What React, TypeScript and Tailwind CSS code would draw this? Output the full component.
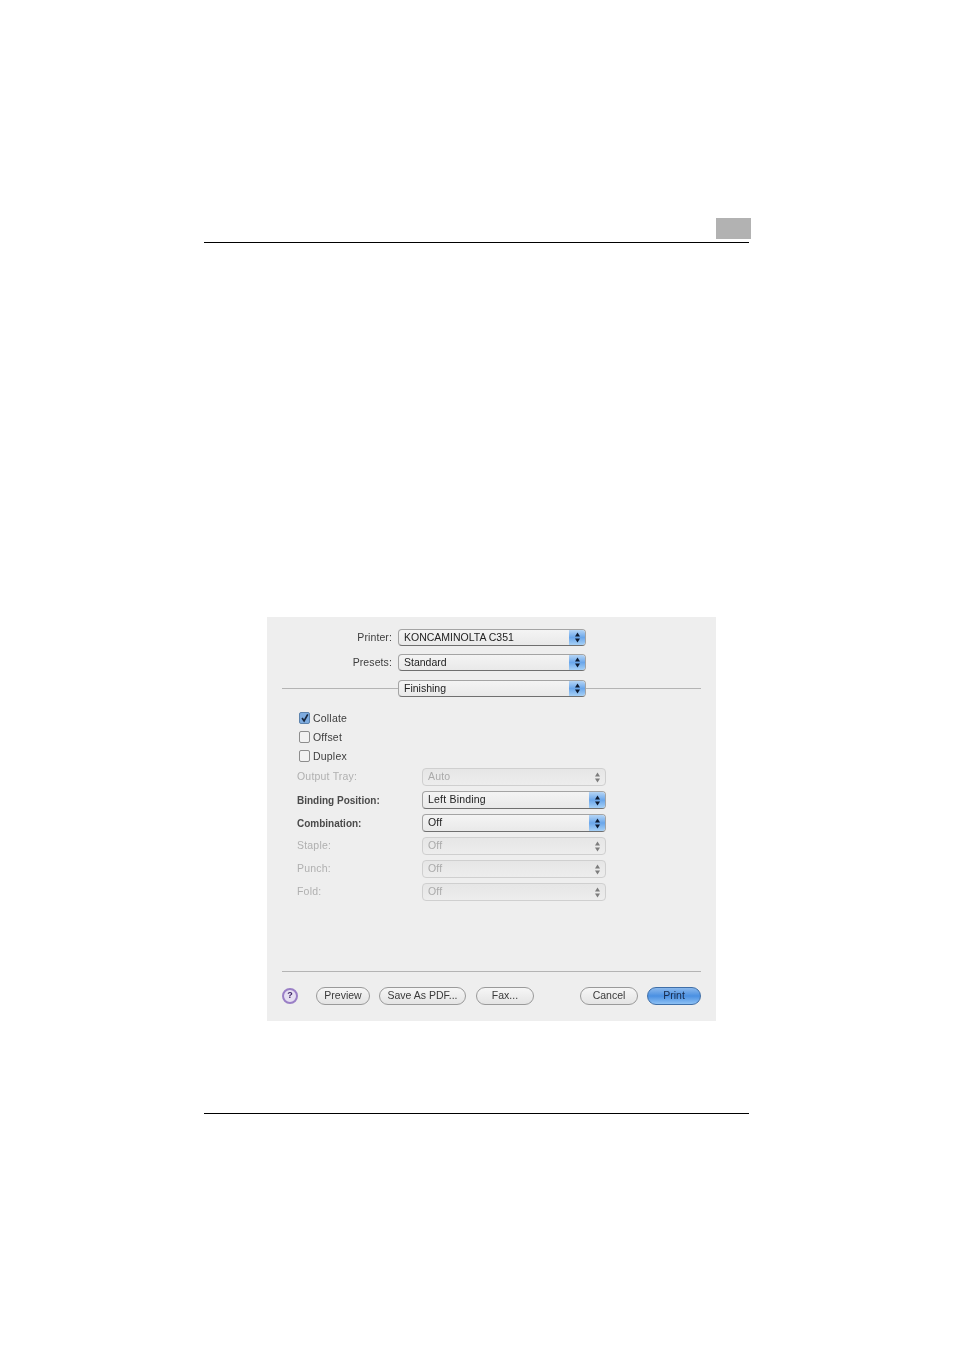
import { ReactNode } from 'react';

function Stepper({ off }: { off?: boolean }) {
  return (
    <span
      className={
        off
          ? 'w-[15px] self-stretch rounded-r-[3px] flex items-center justify-center'
          : 'w-[16px] self-stretch rounded-r-[3px] flex items-center justify-center bg-gradient-to-b from-[#b5d5f5] via-[#6aa6ea] to-[#a6d0f6]'
      }
    >
      <svg width="7" height="13" viewBox="0 0 7 13">
        <path d="M3.5 1.5 6 5.5H1z" fill={off ? '#7c7c7c' : '#0c1a30'} />
        <path d="M3.5 11.5 6 7.5H1z" fill={off ? '#7c7c7c' : '#0c1a30'} />
      </svg>
    </span>
  );
}

function Select({ value, off, className }: { value: string; off?: boolean; className: string }) {
  return (
    <div
      className={
        'flex items-center justify-between rounded-[4px] border bg-gradient-to-b pl-[5px] text-[10.5px] ' +
        (off
          ? 'border-[#cfcfcf] from-[#e6e6e6] to-[#ededed] text-[#aaaaaa] tracking-[0.2px] '
          : 'border-[#a4a4a4] border-b-[#6f6f6f] from-[#f4f4f4] to-[#e9e9e9] text-[#222222] ') +
        className
      }
    >
      <span>{value}</span>
      <Stepper off={off} />
    </div>
  );
}

function Check({ label, checked }: { label: string; checked?: boolean }) {
  return (
    <div className="flex items-center h-[12px] text-[10.5px] tracking-[0.2px] text-[#3d3d3d]">
      <span
        className={
          'w-[11px] h-[12px] mr-[3px] rounded-[2px] border flex items-center justify-center ' +
          (checked ? 'bg-[#7dabdf] border-[#5d83ad]' : 'bg-[#f2f2f2] border-[#8d8d8d]')
        }
      >
        {checked && (
          <svg width="11" height="12" viewBox="0 0 11 12">
            <path d="M2.5 6 5 9.5 9.5 1.5" fill="none" stroke="#16243a" strokeWidth="2" />
          </svg>
        )}
      </span>
      <span className="pt-[2px]">{label}</span>
    </div>
  );
}

function TopRow({ label, value }: { label?: string; value: string }) {
  return (
    <div className="flex items-center h-[17px]">
      <span className="w-[125px] pr-[6px] text-right text-[10.5px] tracking-[0.1px] text-[#3d3d3d]">{label}</span>
      <Select value={value} className="w-[188px] h-[17px]" />
    </div>
  );
}

function Row({ label, value, off }: { label: string; value: string; off?: boolean }) {
  return (
    <div className="flex items-center h-[18px]">
      <span
        className={
          'w-[125px] ' +
          (off ? 'text-[10.5px] tracking-[0.2px] text-[#b0b0b0]' : 'text-[10px] text-[#4a4a4a] font-bold')
        }
      >
        {label}
      </span>
      <Select value={value} off={off} className="w-[184px] h-[18px] tracking-[0.2px]" />
    </div>
  );
}

function Pill({ children, className }: { children: ReactNode; className: string }) {
  return (
    <div
      className={
        'h-[18px] rounded-full border border-[#9a9a9a] bg-gradient-to-b from-[#f6f6f6] to-[#e4e4e4] flex items-center justify-center text-[10.5px] text-[#3a3a3a] ' +
        className
      }
    >
      {children}
    </div>
  );
}

export default function App() {
  return (
    <div className="relative w-[954px] h-[1350px] bg-white pt-[218px] font-['Liberation_Sans',sans-serif]">
      {/* Page header */}
      <div className="ml-[204px] w-[547px]">
        <div className="ml-auto w-[35px] h-[21px] bg-[#b2b2b2]" />
        <div className="mt-[3px] w-[545px] h-px bg-black" />
      </div>

      {/* Print dialog */}
      <div className="ml-[267px] mt-[374px] w-[449px] h-[404px] bg-[#eeeeee] pt-[12px] blur-[0.7px]">
        <div className="pl-[6px] flex flex-col gap-[8px]">
          <TopRow label="Printer:" value="KONCAMINOLTA C351" />
          <TopRow label="Presets:" value="Standard" />
        </div>
        <div className="relative mt-[9px] h-[17px] ml-[15px] w-[419px]">
          <div className="absolute left-0 right-0 top-[8px] h-px bg-[#b4b4b4]" />
          <div className="absolute left-[116px] top-0">
            <Select value="Finishing" className="w-[188px] h-[17px]" />
          </div>
        </div>

        <div className="mt-[15px] ml-[32px] flex flex-col gap-[7px]">
          <Check label="Collate" checked />
          <Check label="Offset" />
          <Check label="Duplex" />
        </div>

        <div className="mt-[6px] ml-[30px] flex flex-col gap-[5px]">
          <Row label="Output Tray:" value="Auto" off />
          <Row label="Binding Position:" value="Left Binding" />
          <Row label="Combination:" value="Off" />
          <Row label="Staple:" value="Off" off />
          <Row label="Punch:" value="Off" off />
          <Row label="Fold:" value="Off" off />
        </div>

        <div className="mt-[70px] ml-[15px] w-[419px] h-px bg-[#b4b4b4]" />

        <div className="mt-[15px] ml-[15px] w-[419px] flex items-center">
          <div className="w-[16px] h-[16px] rounded-full border-2 border-[#9a7fc6] bg-[#e6dff2] flex items-center justify-center text-[9px] font-bold text-[#3d2566]">
            ?
          </div>
          <Pill className="ml-[18px] w-[54px]">Preview</Pill>
          <Pill className="ml-[9px] w-[87px]">Save As PDF...</Pill>
          <Pill className="ml-[10px] w-[58px]">Fax...</Pill>
          <Pill className="ml-[46px] w-[58px]">Cancel</Pill>
          <div className="ml-[9px] w-[54px] h-[18px] rounded-full border border-[#3f6fa8] bg-gradient-to-b from-[#8ab8ec] via-[#4a90e2] to-[#8cc0f4] flex items-center justify-center text-[10.5px] text-[#16294a]">
            Print
          </div>
        </div>
      </div>

      {/* Page footer */}
      <div className="ml-[204px] mt-[92px] w-[545px] h-px bg-black" />
    </div>
  );
}
